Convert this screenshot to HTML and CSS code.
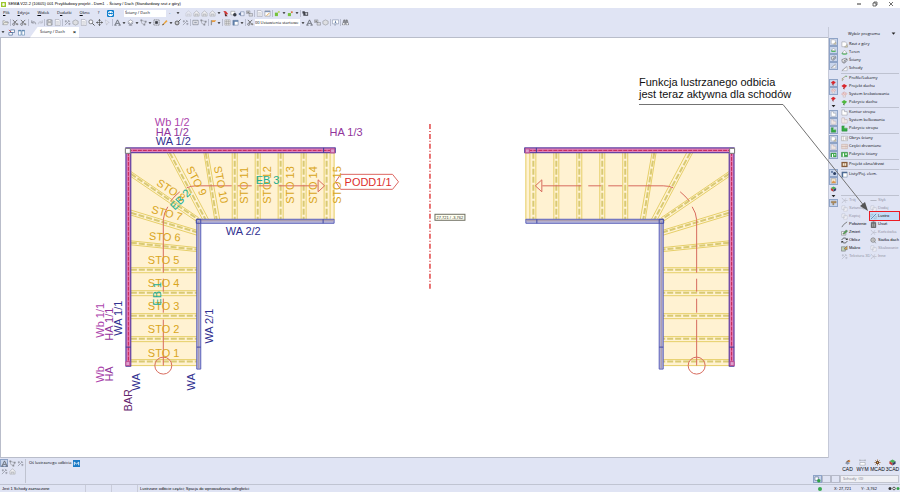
FILE: index.html
```html
<!DOCTYPE html>
<html lang="pl">
<head>
<meta charset="utf-8">
<title>SEMA V22-2</title>
<link rel="stylesheet" href="styles.css">
</head>
<body>
<svg class="sprite" aria-hidden="true">
  <defs>
    <symbol id="folder" viewBox="0 0 16 16"><path d="M2 13V4h4l2 2h5v2M2 13l3-5h10l-3 5z" fill="#ecebe3" stroke="#77797f"/></symbol>
    <symbol id="cut" viewBox="0 0 16 16"><path d="M2 2l10 11M12 2L5 9" fill="none" stroke="#666" stroke-width="2"/><circle cx="4" cy="12" r="2.5" fill="none" stroke="#555" stroke-width="1.5"/><circle cx="12" cy="12" r="2.5" fill="#888"/></symbol>
    <symbol id="undo" viewBox="0 0 16 16"><path d="M4 3v6h6M4 9c3-5 9-3 9 3" fill="none" stroke="#8c8f99" stroke-width="2"/></symbol>
    <symbol id="redo" viewBox="0 0 16 16"><path d="M12 3v6H6M12 9C9 4 3 6 3 12" fill="none" stroke="#b8bbc8" stroke-width="2"/></symbol>
    <symbol id="save" viewBox="0 0 16 16"><path d="M2 2h12v12H2z" fill="#c6c8cf" stroke="#666a75"/><path d="M5 2h6v4H5zM4 9h8v5H4z" fill="#fff" stroke="#777"/></symbol>
    <symbol id="page" viewBox="0 0 16 16"><path d="M3 1h8l3 3v11H3z" fill="#f8f8fb" stroke="#858894"/><path d="M5 6h6M5 9h7M5 12h6" stroke="#a4a6b0"/></symbol>
    <symbol id="frame" viewBox="0 0 16 16"><path d="M2 3h12v10H2z" fill="#f4f4f8" stroke="#777b88" stroke-width="1.5"/><path d="M5 6h6v4H5z" fill="#9ba2b2"/></symbol>
    <symbol id="spark" viewBox="0 0 16 16"><path d="M2 14L12 4M9 2l5 5M4 3v5M2 5h5M10 11h5M12 9v5" fill="none" stroke="#868995" stroke-width="1.5"/></symbol>
    <symbol id="lens" viewBox="0 0 16 16"><circle cx="6.500" cy="6.500" r="4.500" fill="#f7f8ff" stroke="#555" stroke-width="1.5"/><path d="M10 10l5 5" stroke="#444" stroke-width="2"/></symbol>
    <symbol id="move" viewBox="0 0 16 16"><path d="M8 1v14M1 8h14" stroke="#555" stroke-width="1.500"/><path d="M8 0l3 4H5zM8 16l3-4H5zM0 8l4-3v6zM16 8l-4-3v6z" fill="#555"/></symbol>
    <symbol id="pointer" viewBox="0 0 16 16"><path d="M3 2l9 6-4 1-2 5z" fill="#eceef7" stroke="#aeb0bd"/></symbol>
    <symbol id="peak" viewBox="0 0 16 16"><path d="M2 14L8 2l6 12M5 10h6M1 14h5M10 14h5" fill="none" stroke="#555a63" stroke-width="1.8"/></symbol>
    <symbol id="layers" viewBox="0 0 16 16"><path d="M8 2l6 4-6 4-6-4z" fill="#fff" stroke="#696c75"/><path d="M2 9l6 4 6-4M4 14h8" fill="none" stroke="#696c75" stroke-width="1.5"/></symbol>
    <symbol id="poly" viewBox="0 0 16 16"><path d="M3 3l10 3-3 7-6-3z" fill="none" stroke="#777"/><path d="M1 1h4v4H1zM11 4h4v4h-4zM8 11h4v4H8z" fill="#8b8e98"/></symbol>
    <symbol id="target" viewBox="0 0 16 16"><path d="M2 2h12v12H2z" fill="none" stroke="#666" stroke-width="1.500" stroke-dasharray="3 1"/><path d="M5 5h6v6H5z" fill="#34373d"/></symbol>
    <symbol id="pencil" viewBox="0 0 16 16"><path d="M2 14L12 2l3 3L5 14z" fill="#e9a440"/><path d="M2 14l3-4 2 3z" fill="#585858"/></symbol>
    <symbol id="gear" viewBox="0 0 16 16"><circle cx="7" cy="9" r="4.500" fill="#c9cad0" stroke="#555" stroke-width="2"/><path d="M9 7l6-6" stroke="#555" stroke-width="2"/></symbol>
    <symbol id="cloud" viewBox="0 0 16 16"><path d="M2 14V7l6-5 6 5v7z" fill="#f1f1f3" stroke="#a5a6ad" stroke-width="1.3"/><path d="M5 14V9h6v5" fill="#d4d5d9" stroke="#989aa2"/></symbol>
    <symbol id="bolt" viewBox="0 0 16 16"><path d="M3 2l6 1 5 6-5 2z" fill="#d33533"/><path d="M6 6l7 8H7z" fill="#5f2b2b"/></symbol>
    <symbol id="boxdot" viewBox="0 0 16 16"><path d="M2 3h9v8H2z" fill="#fff" stroke="#777"/><circle cx="11" cy="11" r="4" fill="#373b45"/></symbol>
    <symbol id="boxgreen" viewBox="0 0 16 16"><path d="M2 2h8v8H2z" fill="#fff" stroke="#56698f" stroke-width="1.5"/><circle cx="11" cy="11" r="4" fill="#2fa043"/></symbol>
    <symbol id="reply" viewBox="0 0 16 16"><path d="M6 4h8v9H6z" fill="#eef1fc" stroke="#56698f"/><path d="M1 9l5-4v8z" fill="#4a628c"/></symbol>
    <symbol id="two" viewBox="0 0 16 16"><path d="M1 2h8v6H1zM7 8h8v6H7z" fill="#d8d9de" stroke="#70727a"/><path d="M3 4h4v2H3z" fill="#555"/></symbol>
    <symbol id="calendar" viewBox="0 0 16 16"><path d="M2 2h12v12H2z" fill="#fff" stroke="#777"/><path d="M2 2h12v3H2z" fill="#8194b4"/><path d="M6 13l6-6" stroke="#dc9c3c" stroke-width="2"/></symbol>
    <symbol id="leaf" viewBox="0 0 16 16"><path d="M2 6h7v8H2z" fill="#75c23b"/><path d="M9 3h4v3H9z" fill="#b5cf36"/></symbol>
    <symbol id="leafred" viewBox="0 0 16 16"><path d="M2 7h7v7H2z" fill="#75c23b"/><path d="M9 3h4v4H9z" fill="#d97543"/></symbol>
    <symbol id="camera" viewBox="0 0 16 16"><path d="M1 3h5l1 2h7v8H3V8H1z" fill="#40434b"/><circle cx="10" cy="9" r="2.500" fill="#c8cbd6"/></symbol>
    <symbol id="flag" viewBox="0 0 16 16"><path d="M3 3h11l-3 4H5v3z" fill="#e59b3e"/><path d="M3 3v11" stroke="#777" stroke-width="2"/></symbol>
    <symbol id="grid" viewBox="0 0 16 16"><path d="M2 2h12v12H2zM6 2v12M10 2v12M2 6h12M2 10h12" fill="#f2f2f4" stroke="#888"/></symbol>
    <symbol id="pane" viewBox="0 0 16 16"><path d="M2 3h12v11H2z" fill="#fff" stroke="#4a6589"/><path d="M2 3h12v3H2zM2 6h4v8H2z" fill="#5e7ea8"/></symbol>
    <symbol id="hex" viewBox="0 0 16 16"><path d="M8 2l6 3v6l-6 3-6-3V5z" fill="#dedfe3" stroke="#999ba1" stroke-width="1.500"/></symbol>
    <symbol id="bubble" viewBox="0 0 16 16"><path d="M1 2h14v9H9l-2 4-1-4H1z" fill="#fff" stroke="#61708c"/><path d="M8 4v5M6 9h4" stroke="#35578e" stroke-width="1.5"/></symbol>
    <symbol id="binoc" viewBox="0 0 16 16"><path d="M4 2h3v4h2V2h3l3 11H9V9H7v4H1z" fill="#93959d" stroke="#555"/><circle cx="4" cy="11" r="2" fill="#fff"/><circle cx="12" cy="11" r="2" fill="#fff"/></symbol>
    <symbol id="remote" viewBox="0 0 16 16"><rect width="16" height="16" rx="3" fill="#087bcc"/><circle cx="8" cy="8" r="6" fill="#fff"/><path d="M2 8l4-3v2h4V5l4 3-4 3V9H6v2z" fill="#087bcc"/></symbol>
    <symbol id="unpin" viewBox="0 0 16 16"><path d="M6 2h9v6H6zM2 8h8v6H2z" fill="#fff" stroke="#416393" stroke-width="1.5"/><path d="M2 2l5 5" stroke="#d34242" stroke-width="2"/></symbol>
    <symbol id="split" viewBox="0 0 16 16"><path d="M1 3h6v11H1zM9 3h6v11H9z" fill="#fff" stroke="#4b7ba8" stroke-width="1.300"/><path d="M1 3h6v2H1zM9 3h6v2H9z" fill="#4b7ba8"/></symbol>
    <symbol id="plan" viewBox="0 0 16 16"><path d="M2 2h8l3 3v8H2z" fill="#fff" stroke="#85868e"/><path d="M8 14l6-6 1 6z" fill="#ddd5a9" stroke="#888"/></symbol>
    <symbol id="terrain" viewBox="0 0 16 16"><path d="M1 11c2-4 4-4 6-3 2-2 5-1 8 3-3 3-11 3-14 0z" fill="#54bd67"/><path d="M4 7l4-4 4 4v3H4z" fill="#fff" stroke="#777"/></symbol>
    <symbol id="walls" viewBox="0 0 16 16"><path d="M2 6l8-3 4 2-7 3v6l-4-2z" fill="#f7f7f7" stroke="#4e5056" stroke-width="1.300"/><path d="M14 5v4l-4 2V8M7 14l4-2" fill="none" stroke="#555"/></symbol>
    <symbol id="steps" viewBox="0 0 16 16"><path d="M2 13h12V4l-4 3-3 2z" fill="#fafafa" stroke="#8e9099"/><path d="M2 13L13 3" stroke="#777"/></symbol>
    <symbol id="profile" viewBox="0 0 16 16"><path d="M3 14V8l7-5h3M3 8l3 3" fill="none" stroke="#999061" stroke-width="1.500"/><path d="M10 3h4" stroke="#6ab078" stroke-width="2"/></symbol>
    <symbol id="roofred" viewBox="0 0 16 16"><path d="M1 7l6-5 7 4-6 6z" fill="#d9272c"/><path d="M5 10v3l3 2v-3z" fill="#8e2428"/></symbol>
    <symbol id="roofpink" viewBox="0 0 16 16"><path d="M1 7l6-5 7 4-6 6zM4 4l7 5M7 2l-3 7M11 4L7 11" fill="#f7dede" stroke="#cb9b9b"/><path d="M5 10v4h5v-4" fill="#eee" stroke="#b9a4a4"/></symbol>
    <symbol id="roofgreen" viewBox="0 0 16 16"><path d="M1 7l6-5 7 4-6 6z" fill="#4fb83c"/><path d="M5 10v3l3 2v-3z" fill="#376d37"/></symbol>
    <symbol id="slab" viewBox="0 0 16 16"><path d="M2 2h6v4h6v8H2z" fill="#fff" stroke="#82858d"/></symbol>
    <symbol id="beams" viewBox="0 0 16 16"><path d="M2 2h6v4h6v8H2z" fill="#fff" stroke="#b09494"/><path d="M5 2v12M8 6v8M11 6v8" stroke="#cbb6ae"/></symbol>
    <symbol id="slabgreen" viewBox="0 0 16 16"><path d="M2 2h6v5h6v7H2z" fill="#32ad42" stroke="#2b7936"/><path d="M8 2v5h6" fill="none" stroke="#e3f5e5"/></symbol>
    <symbol id="wall" viewBox="0 0 16 16"><path d="M1 3h14v10H1zM5 3v10M10 6h3v4h-3z" fill="#fff" stroke="#8c8886"/></symbol>
    <symbol id="timber" viewBox="0 0 16 16"><path d="M1 3h14v10H1zM4 3v10M7 3v10M10 3v10M13 3v10M1 8h14" fill="#fbf7f5" stroke="#bd9990"/></symbol>
    <symbol id="wallgreen" viewBox="0 0 16 16"><path d="M1 3h14v10H1z" fill="#39ad46" stroke="#26772f"/><path d="M4 5h3v8H4zM10 5h3v4h-3z" fill="#fff"/></symbol>
    <symbol id="window" viewBox="0 0 16 16"><path d="M1 2h14v12H1z" fill="#855b3a"/><path d="M4 5h8v6H4z" fill="#f3e5cf"/><path d="M8 4v8" stroke="#9a6c45"/></symbol>
    <symbol id="list" viewBox="0 0 16 16"><path d="M2 2h12v12H2z" fill="#fff" stroke="#526a8c"/><path d="M2 2h12v3H2zM2 5h3v9H2z" fill="#4d6b94"/></symbol>
    <symbol id="cube" viewBox="0 0 16 16"><path d="M8 1l7 4-7 4-7-4z" fill="#4aae56"/><path d="M1 5l7 4v6l-7-4z" fill="#c33c36"/><path d="M15 5L8 9v6l7-4z" fill="#343e69"/></symbol>
    <symbol id="dots" viewBox="0 0 16 16"><circle cx="4" cy="5" r="3" fill="#6880a8"/><circle cx="11" cy="9" r="4" fill="#2d4064"/></symbol>
    <symbol id="stamp" viewBox="0 0 16 16"><path d="M2 3h13v5H9v5H6V8H2z" fill="#b08a56" stroke="#807562"/></symbol>
    <symbol id="picture" viewBox="0 0 16 16"><path d="M2 2h12v12H2z" fill="#f4ead7" stroke="#8b7b64"/><path d="M3 13l4-7 3 4 2-3 2 6z" fill="#dd9447"/></symbol>
    <symbol id="trim" viewBox="0 0 16 16"><path d="M2 2l5 6-5 6M7 8h8M11 3l-3 5 3 5" fill="none" stroke="#b7b9c5" stroke-width="1.500"/></symbol>
    <symbol id="joint" viewBox="0 0 16 16"><path d="M1 8h14" stroke="#aeb0bd" stroke-width="2"/></symbol>
    <symbol id="copy" viewBox="0 0 16 16"><path d="M2 2h7v8H2zM6 6h8v8H6z" fill="#f3f4fb" stroke="#b4b6c2"/></symbol>
    <symbol id="mirror" viewBox="0 0 16 16"><path d="M2 14L14 2" stroke="#376a99" stroke-width="1.500"/><path d="M2 3h5L2 9zM14 13H9l5-6z" fill="#e6f3ff" stroke="#7197b7"/></symbol>
    <symbol id="place" viewBox="0 0 16 16"><path d="M2 14l4-6 8-6" fill="none" stroke="#666" stroke-width="1.800"/></symbol>
    <symbol id="trash" viewBox="0 0 16 16"><path d="M3 5h10v10H3zM2 3h12M6 2h4" fill="#777" stroke="#444" stroke-width="1.500"/><path d="M6 6v7M10 6v7" stroke="#ddd"/></symbol>
    <symbol id="edit" viewBox="0 0 16 16"><path d="M1 6h10v8H1z" fill="#fff" stroke="#555"/><path d="M4 11l8-9 3 3-8 7z" fill="#53aa55" stroke="#4f554d"/></symbol>
    <symbol id="refresh" viewBox="0 0 16 16"><path d="M2 7c1-6 10-6 12-1M14 9c-1 6-10 6-12 1" fill="none" stroke="#333" stroke-width="1.700"/><path d="M15 2v5h-5zM1 14V9h5z" fill="#333"/></symbol>
    <symbol id="macro" viewBox="0 0 16 16"><path d="M1 4h9v10H1z" fill="#bed1ba" stroke="#555"/><path d="M7 9l7-7v9z" fill="#dfaa46" stroke="#555"/></symbol>
    <symbol id="mesh" viewBox="0 0 16 16"><circle cx="7" cy="7" r="5" fill="#fff" stroke="#555" stroke-width="1.500"/><path d="M3 7h8M7 3v8M10 11l4 3" stroke="#555"/></symbol>
    <symbol id="cad" viewBox="0 0 16 16"><path d="M2 9l6-3 6 3-6 4z" fill="#8795ab"/><path d="M8 3h6v4H8z" fill="#df8a3f"/><path d="M5 7l7-4" stroke="#664d42" stroke-width="2"/></symbol>
    <symbol id="dim" viewBox="0 0 16 16"><path d="M1 3h14M2 1v4M14 1v4M2 8h12v6H2z" fill="#fff" stroke="#85888f"/></symbol>
    <symbol id="mcad" viewBox="0 0 16 16"><path d="M8 1v14M1 8h14M3 3l10 10M13 3L3 13" stroke="#a07346" stroke-width="1.800"/><circle cx="8" cy="8" r="3.500" fill="#54331f"/><circle cx="8" cy="8" r="1.500" fill="#eab65e"/></symbol>
    <symbol id="tri" viewBox="0 0 16 16"><path d="M2 5h12l-6 7z" fill="#222"/></symbol>
    <symbol id="logo" viewBox="0 0 16 16"><path d="M0 0h16v16H0z" fill="#9cc72e"/><path d="M4 5l4-2 4 2v6l-4 2-4-2z" fill="#f6faeb"/></symbol>
  </defs>
</svg>

<div class="app">
  <header class="titlebar">
    <svg class="ico logo"><use href="#logo"/></svg>
    <h1 class="title">SEMA V22-2 (10605) 001 Przykładowy projekt - Dom1 &nbsp;- Ściany / Dach (Standardowy rzut z góry)</h1>
    <div class="window-buttons">
      <button aria-label="Minimalizuj"><svg viewBox="0 0 8 8"><path d="M2 4h4" stroke="#333"/></svg></button>
      <button aria-label="Przywróć"><svg viewBox="0 0 8 8"><path d="M2 3h3v3H2zM3 3V2h3v3H5" fill="none" stroke="#333" stroke-width=".7"/></svg></button>
      <button aria-label="Zamknij"><svg viewBox="0 0 8 8"><path d="M2 2l4 4M6 2L2 6" stroke="#333" stroke-width=".7"/></svg></button>
    </div>
  </header>

  <div class="menubar">
    <nav class="menu">
      <a href="#"><u>P</u>lik</a><a href="#"><u>E</u>dycja</a><a href="#"><u>W</u>idok</a><a href="#">D<u>o</u>datki</a><a href="#"><u>O</u>kno</a><a href="#">?</a>
    </nav>
    <button class="tool" aria-label="Zdalna pomoc"><svg class="ico"><use href="#remote"/></svg></button>
    <select class="field program" aria-label="Program"><option>Ściany / Dach</option></select>
    <div class="tools">
      <span class="dash">-</span>
      <button class="tool caret" aria-label="Rozwiń"><svg class="ico"><use href="#tri"/></svg></button>
      <i class="space"></i>
      <button class="tool faded" aria-label="Dom"><svg class="ico"><use href="#cloud"/></svg></button>
      <button class="tool" aria-label="Piętro"><svg class="ico"><use href="#cloud"/></svg></button>
      <button class="tool" aria-label="Parter"><svg class="ico"><use href="#cloud"/></svg></button>
      <button class="tool" aria-label="Widok domu"><svg class="ico"><use href="#cloud"/></svg></button>
      <button class="tool caret" aria-label="Więcej"><svg class="ico"><use href="#tri"/></svg></button>
      <button class="tool" aria-label="Szybki wybór"><svg class="ico"><use href="#bolt"/></svg></button>
      <button class="tool" aria-label="Punkt"><svg class="ico"><use href="#boxdot"/></svg></button>
      <button class="tool" aria-label="Wstecz"><svg class="ico"><use href="#reply"/></svg></button>
      <button class="tool" aria-label="Grupy"><svg class="ico"><use href="#two"/></svg></button>
      <i class="sep"></i>
      <button class="tool" aria-label="Strona"><svg class="ico"><use href="#page"/></svg></button>
      <button class="tool" aria-label="Plan"><svg class="ico"><use href="#calendar"/></svg></button>
      <i class="sep"></i>
      <button class="tool" aria-label="Eksport"><svg class="ico"><use href="#leaf"/></svg></button>
      <button class="tool caret" aria-label="Opcje eksportu"><svg class="ico"><use href="#tri"/></svg></button>
      <button class="tool" aria-label="Import"><svg class="ico"><use href="#leafred"/></svg></button>
      <button class="tool caret" aria-label="Opcje importu"><svg class="ico"><use href="#tri"/></svg></button>
      <i class="sep"></i>
      <button class="tool" aria-label="Zrzut"><svg class="ico"><use href="#camera"/></svg></button>
    </div>
  </div>

  <div class="toolbar tools">
    <button class="tool" aria-label="Otwórz"><svg class="ico"><use href="#folder"/></svg></button>
    <i class="sep"></i>
    <button class="tool" aria-label="Wytnij"><svg class="ico"><use href="#cut"/></svg></button>
    <button class="tool" aria-label="Rozdziel"><svg class="ico"><use href="#cut"/></svg></button>
    <i class="sep"></i>
    <button class="tool slim" aria-label="Cofnij"><svg class="ico"><use href="#undo"/></svg></button>
    <button class="tool slim" aria-label="Ponów"><svg class="ico"><use href="#redo"/></svg></button>
    <i class="sep"></i>
    <button class="tool" aria-label="Zapisz"><svg class="ico"><use href="#save"/></svg></button>
    <button class="tool" aria-label="Drukuj"><svg class="ico"><use href="#page"/></svg></button>
    <i class="sep"></i>
    <button class="tool" aria-label="Zaznacz"><svg class="ico"><use href="#spark"/></svg></button>
    <button class="tool" aria-label="Środek"><svg class="ico"><use href="#hex"/></svg></button>
    <button class="tool" aria-label="Arkusz"><svg class="ico"><use href="#page"/></svg></button>
    <button class="tool" aria-label="Powiększ"><svg class="ico"><use href="#lens"/></svg></button>
    <button class="tool" aria-label="Przesuń"><svg class="ico"><use href="#move"/></svg></button>
    <button class="tool" aria-label="Wskaźnik"><svg class="ico"><use href="#pointer"/></svg></button>
    <i class="sep"></i>
    <button class="tool" aria-label="Wysokość"><svg class="ico"><use href="#peak"/></svg></button>
    <button class="tool caret" aria-label="Opcje wysokości"><svg class="ico"><use href="#tri"/></svg></button>
    <button class="tool" aria-label="Warstwy"><svg class="ico"><use href="#layers"/></svg></button>
    <button class="tool caret" aria-label="Opcje warstw"><svg class="ico"><use href="#tri"/></svg></button>
    <button class="tool" aria-label="Wielokąt"><svg class="ico"><use href="#poly"/></svg></button>
    <button class="tool caret" aria-label="Opcje wielokąta"><svg class="ico"><use href="#tri"/></svg></button>
    <button class="tool" aria-label="Cel"><svg class="ico"><use href="#target"/></svg></button>
    <button class="tool" aria-label="Rysuj"><svg class="ico"><use href="#pencil"/></svg></button>
    <button class="tool caret" aria-label="Opcje rysowania"><svg class="ico"><use href="#tri"/></svg></button>
    <button class="tool" aria-label="Obróbka"><svg class="ico"><use href="#gear"/></svg></button>
    <button class="tool" aria-label="Grupuj"><svg class="ico"><use href="#spark"/></svg></button>
    <i class="sep"></i>
    <button class="tool" aria-label="Znajdź"><svg class="ico"><use href="#frame"/></svg></button>
    <button class="tool" aria-label="Punkty"><svg class="ico"><use href="#poly"/></svg></button>
    <i class="sep"></i>
    <button class="tool slim" aria-label="Znacznik"><svg class="ico"><use href="#flag"/></svg></button>
    <button class="tool caret" aria-label="Opcje znacznika"><svg class="ico"><use href="#tri"/></svg></button>
    <i class="sep"></i>
    <button class="tool" aria-label="Siatka"><svg class="ico"><use href="#grid"/></svg></button>
    <button class="tool" aria-label="Panele"><svg class="ico"><use href="#pane"/></svg></button>
    <button class="tool caret" aria-label="Opcje paneli"><svg class="ico"><use href="#tri"/></svg></button>
    <i class="sep"></i>
    <button class="tool" aria-label="Ustawienia"><svg class="ico"><use href="#cut"/></svg></button>
    <select class="field settings" aria-label="Ustawienia startowe"><option>00 Ustawienia startowe</option></select>
    <button class="tool caret" aria-label="Lista ustawień"><svg class="ico"><use href="#tri"/></svg></button>
    <button class="tool" aria-label="Pobierz"><svg class="ico"><use href="#peak"/></svg></button>
    <button class="tool" aria-label="Przekaż"><svg class="ico"><use href="#two"/></svg></button>
    <button class="tool" aria-label="Zablokuj"><svg class="ico"><use href="#hex"/></svg></button>
    <i class="sep"></i>
    <button class="tool" aria-label="Informacja"><svg class="ico"><use href="#bubble"/></svg></button>
    <i class="sep"></i>
    <button class="tool" aria-label="Szukaj"><svg class="ico"><use href="#binoc"/></svg></button>
  </div>

  <main class="workspace">
    <section class="editor">
      <div class="tabs">
        <button class="tool caret" aria-label="Lista okien"><svg class="ico"><use href="#tri"/></svg></button>
        <button class="tool" aria-label="Odepnij"><svg class="ico"><use href="#unpin"/></svg></button>
        <button class="tool" aria-label="Podziel okno"><svg class="ico"><use href="#split"/></svg></button>
        <div class="tab"><span>Ściany / Dach</span><button aria-label="Zamknij kartę">×</button></div>
      </div>
      <div class="canvas">
        <svg class="drawing" viewBox="1 38 828 420" role="img" aria-label="Rzut schodów">
          <defs>
            <g id="stairs">
              <path d="M130 152H335V221H199V366H130z" fill="#fff2d2"/>
              <g fill="none" stroke="#e6cf68">
                <path d="M130 268H199M130 273H199M130 291H199M130 296H199M130 314H199M130 319H199M130 337H199M130 342H199M130 360H199M130 366H199"/>
                <path d="M130 241L199 248M130 245L199 252M130 210L199 231M130 215L199 236M130 171L199 218M130 176L199 223M167 152L203 220M173 152L209 220M204 152L215 220M208 152L220 220"/>
                <path d="M232.500 152V220M237.500 152V220M255.500 152V220M260.500 152V220M278.500 152V220M283.500 152V220M301.500 152V220M306.500 152V220M324.500 152V220M330.500 152V220M334.500 152V220"/>
              </g>
              <g fill="none" stroke="#d9ca74" stroke-width="2" stroke-dasharray="6 2">
                <path d="M131 270H199M131 293H199M131 316H199M131 339H199M131 362H199M131 243L199 250M131 213L199 233M131 174L199 220M170 153L206 220M206 153L217 220M235 153V220M258 153V220M281 153V220M304 153V220M327 153V220"/>
              </g>
              <g fill="none" stroke="#d76a5c">
                <path d="M318 186H279M272 186H259M252 186H238M232 186H197Q191 186 187 188M180 192Q175 196 171 201M168 207Q164 213 163.500 220V273M163.500 279V292M163.500 299V313M163.500 320V366M318.500 180V192L325 186z"/>
                <circle cx="163.500" cy="366" r="8.500"/>
              </g>
              <path d="M197 219.500H334.500V223.500H201V369.500H197z" fill="#b9bade" stroke="#5a5fb9"/>
              <path d="M199 369V221H334" fill="none" stroke="#a894a0"/>
              <path d="M196.500 219.500h4.500v4h-4.500zM323.500 219.500v4M197 347.500h4" fill="none" stroke="#4149a6"/>
              <path d="M128.500 367V150.500H336" fill="none" stroke="#6544a5" stroke-width="6"/>
              <path d="M128.500 366V150.500H335" fill="none" stroke="#e282b8" stroke-width="3.500"/>
              <path d="M128.500 366V150.500H335" fill="none" stroke="#c6214f" stroke-dasharray="4 1"/>
              <path d="M125.500 148.500h5v5h-5z" fill="#fff" stroke="#777"/>
              <path d="M126 366.500h5M335.500 148v5M324 148v5M126 347.500h5" stroke="#3c3f99"/>
              <path d="M331 149h4v4h-4zM126 362h4v4h-4z" fill="#dda2cf" stroke="#c04e91"/>
            </g>
          </defs>
          <use href="#stairs"/>
          <use href="#stairs" transform="matrix(-1 0 0 1 861 0)"/>
          <path d="M336 182l5-7.500h52l6 7.500-6 7.500h-52z" fill="none" stroke="#dc6660"/>
          <g class="label step">
            <text x="148" y="357">STO 1</text><text x="148" y="333">STO 2</text><text x="148" y="310">STO 3</text><text x="148" y="287">STO 4</text><text x="148" y="264">STO 5</text>
            <text transform="translate(149 240) rotate(3)">STO 6</text>
            <text transform="translate(151 213) rotate(15)">STO 7</text>
            <text transform="translate(156 185) rotate(33)">STO 8</text>
            <text transform="translate(186 169) rotate(62)">STO 9</text>
            <text transform="translate(214 167) rotate(79)">STO 10</text>
            <text transform="translate(248 204) rotate(-90)">STO 11</text>
            <text transform="translate(271 204) rotate(-90)">STO 12</text>
            <text transform="translate(294 204) rotate(-90)">STO 13</text>
            <text transform="translate(317 204) rotate(-90)">STO 14</text>
            <text transform="translate(341 204) rotate(-90)">STO 15</text>
          </g>
          <g class="label axis">
            <text transform="translate(161 306) rotate(-90)">EB 1</text>
            <text transform="translate(175 211) rotate(-46)">EB 2</text>
            <text x="256" y="184">EB 3</text>
          </g>
          <g class="label outer">
            <text x="155" y="126">Wb 1/2</text>
            <text transform="translate(104 338) rotate(-90)">Wb 1/1</text>
            <text transform="translate(104 383) rotate(-90)">Wb</text>
          </g>
          <g class="label handrail">
            <text x="156" y="136">HA 1/2</text><text x="330" y="136">HA 1/3</text>
            <text transform="translate(113 341) rotate(-90)">HA 1/1</text>
            <text transform="translate(113 382) rotate(-90)">HA</text>
          </g>
          <g class="label stringer">
            <text x="156" y="145">WA 1/2</text><text x="226" y="235">WA 2/2</text>
            <text transform="translate(122 336) rotate(-90)">WA 1/1</text>
            <text transform="translate(213 344) rotate(-90)">WA 2/1</text>
            <text transform="translate(140 391) rotate(-90)">WA</text>
            <text transform="translate(195 391) rotate(-90)">WA</text>
          </g>
          <text class="label baluster" transform="translate(132 412) rotate(-90)">BAR</text>
          <text class="label landing" x="345" y="186">PODD1/1</text>
          <path d="M430.500 124V289" stroke="#dc2a2a" stroke-width="1.300" stroke-dasharray="5 2 1 2"/>
          <rect x="435.500" y="214.500" width="30" height="6" fill="#fffff0" stroke="#6f6f62"/>
          <text class="coords" x="437" y="219">27,721 / -3,762</text>
        </svg>
      </div>
    </section>

    <aside class="side">
      <div class="side-head"><span>Wybór programu</span><svg class="ico small"><use href="#tri"/></svg></div>
      <div class="side-body">
        <div class="rail">
          <div class="rail-group">
            <button class="on" aria-label="Rzut"><svg class="ico"><use href="#plan"/></svg></button>
            <button class="on" aria-label="Pokaż teren"><svg class="ico"><use href="#terrain"/></svg></button>
            <button class="on" aria-label="Pokaż ściany"><svg class="ico"><use href="#walls"/></svg></button>
            <button class="on" aria-label="Pokaż schody"><svg class="ico"><use href="#steps"/></svg></button>
          </div>
          <div class="rail-group">
            <button class="on" aria-label="Pokaż dach"><svg class="ico"><use href="#roofred"/></svg></button>
            <button class="on" aria-label="Pokaż krokwie"><svg class="ico"><use href="#roofpink"/></svg></button>
            <button aria-label="Pokaż pokrycie"><svg class="ico"><use href="#roofred"/></svg></button>
            <svg class="ico small"><use href="#tri"/></svg>
          </div>
          <div class="rail-group">
            <button class="on" aria-label="Pokaż kontur"><svg class="ico"><use href="#slab"/></svg></button>
            <button class="on" aria-label="Pokaż belki"><svg class="ico"><use href="#beams"/></svg></button>
            <button class="on" aria-label="Pokaż strop"><svg class="ico"><use href="#slabgreen"/></svg></button>
          </div>
          <div class="rail-group">
            <button class="on" aria-label="Pokaż obrys"><svg class="ico"><use href="#plan"/></svg></button>
            <button class="on" aria-label="Pokaż części"><svg class="ico"><use href="#beams"/></svg></button>
            <button class="on" aria-label="Pokaż poszycie"><svg class="ico"><use href="#wallgreen"/></svg></button>
          </div>
          <div class="rail-group last">
            <button class="on" aria-label="Punkty"><svg class="ico"><use href="#dots"/></svg></button>
            <button class="on" aria-label="Obraz"><svg class="ico"><use href="#picture"/></svg></button>
            <button aria-label="Bryła"><svg class="ico"><use href="#cube"/></svg></button>
            <svg class="ico small"><use href="#tri"/></svg>
            <button class="on" aria-label="Oznacz"><svg class="ico"><use href="#stamp"/></svg></button>
          </div>
        </div>
        <div class="programs">
          <div class="group">
            <button><svg class="ico"><use href="#plan"/></svg>Rzut z góry</button>
            <button><svg class="ico"><use href="#terrain"/></svg>Teren</button>
            <button><svg class="ico"><use href="#walls"/></svg>Ściany</button>
            <button><svg class="ico"><use href="#steps"/></svg>Schody</button>
          </div>
          <div class="group">
            <button><svg class="ico"><use href="#profile"/></svg>Profile/Lukarny</button>
            <button><svg class="ico"><use href="#roofred"/></svg>Projekt dachu</button>
            <button><svg class="ico"><use href="#roofpink"/></svg>System krokwiowania</button>
            <button><svg class="ico"><use href="#roofgreen"/></svg>Pokrycie dachu</button>
          </div>
          <div class="group">
            <button><svg class="ico"><use href="#slab"/></svg>Kontur stropu</button>
            <button><svg class="ico"><use href="#beams"/></svg>System belkowania</button>
            <button><svg class="ico"><use href="#slabgreen"/></svg>Pokrycie stropu</button>
          </div>
          <div class="group">
            <button><svg class="ico"><use href="#wall"/></svg>Obrys ściany</button>
            <button><svg class="ico"><use href="#timber"/></svg>Części drewniane</button>
            <button><svg class="ico"><use href="#wallgreen"/></svg>Pokrycie ściany</button>
          </div>
          <div class="group"><button><svg class="ico"><use href="#window"/></svg>Projekt okna/drzwi</button></div>
          <div class="group"><button><svg class="ico"><use href="#list"/></svg>Listy/Poj. elem.</button></div>
          <div class="edit">
            <button disabled><svg class="ico"><use href="#trim"/></svg>Trój</button>
            <button disabled><svg class="ico"><use href="#joint"/></svg>Styk</button>
            <button disabled><svg class="ico"><use href="#copy"/></svg>Sztancuj</button>
            <button disabled><svg class="ico"><use href="#copy"/></svg>Dodaj</button>
            <button disabled><svg class="ico"><use href="#copy"/></svg>Kopiuj</button>
            <button class="active"><svg class="ico"><use href="#mirror"/></svg>Lustro</button>
            <button><svg class="ico"><use href="#place"/></svg>Położenie</button>
            <button><svg class="ico"><use href="#trash"/></svg>Usuń</button>
            <button><svg class="ico"><use href="#edit"/></svg>Zmień</button>
            <button disabled><svg class="ico"><use href="#trim"/></svg>Końcówka</button>
            <button><svg class="ico"><use href="#refresh"/></svg>Oblicz</button>
            <button><svg class="ico"><use href="#mesh"/></svg>Siatka dach</button>
            <button><svg class="ico"><use href="#macro"/></svg>Makro</button>
            <button disabled><svg class="ico"><use href="#copy"/></svg>Skalowanie</button>
            <button disabled><svg class="ico faded"><use href="#spark"/></svg>Tekstura 3D</button>
            <button disabled><svg class="ico"><use href="#trim"/></svg>Inne</button>
          </div>
        </div>
      </div>
    </aside>

    <svg class="callout" viewBox="0 0 270 150" aria-label="Objaśnienie">
      <g class="callout-text"><text x="9" y="20">Funkcja lustrzanego odbicia</text><text x="9" y="32">jest teraz aktywna dla schodów</text></g>
      <path d="M9 38.500H153L235 141" fill="none" stroke="#737373"/>
      <path d="M238 145l-8-5 5-4z" fill="#555"/>
    </svg>
  </main>

  <section class="options">
    <div class="snaps">
      <button class="on" aria-label="Odbicie w osi"><svg class="ico"><use href="#peak"/></svg></button>
      <button aria-label="Odbicie w punkcie"><svg class="ico"><use href="#poly"/></svg></button>
      <button aria-label="Odbicie krawędzi"><svg class="ico"><use href="#spark"/></svg></button>
      <button aria-label="Obrót"><svg class="ico"><use href="#spark"/></svg></button>
      <button aria-label="Warstwa"><svg class="ico"><use href="#cloud"/></svg></button>
    </div>
    <div class="prompt"><span>Oś lustrzanego odbicia</span><button aria-label="Wybierz oś"><svg viewBox="0 0 16 16"><path d="M3 12V5l5 4 5-4v7" fill="none" stroke="#fff" stroke-width="2"/></svg></button></div>
    <div class="modes">
      <div class="mode-row">
        <button><svg class="ico"><use href="#cad"/></svg>CAD</button>
        <button><svg class="ico"><use href="#dim"/></svg>WYM</button>
        <button><svg class="ico"><use href="#mcad"/></svg>MCAD</button>
        <button><svg class="ico"><use href="#cube"/></svg>3CAD</button>
      </div>
      <div class="filter">
        <button class="on" aria-label="Filtr elementów"><svg class="ico"><use href="#boxgreen"/></svg></button>
        <button aria-label="Filtr grup"></button>
        <button aria-label="Filtr warstw"></button>
        <select aria-label="Element"><option>Schody &nbsp;(0)</option></select>
      </div>
    </div>
  </section>

  <footer class="status">
    <span class="cell selected">Jest 1 Schody zaznaczone</span>
    <span class="cell blank"></span>
    <span class="cell blank"></span>
    <span class="cell hint">Lustrzane odbicie części; Spacja do wprowadzania odległości</span>
    <i class="led"></i>
    <span class="pos">X: 27,721</span>
    <span class="pos">Y: -3,762</span>
    <svg class="leds" viewBox="0 0 12 5"><circle cx="2" cy="2.500" r="1.500" fill="#333"/><circle cx="6" cy="2.500" r="1.300" fill="#fff" stroke="#555"/><circle cx="10" cy="2.500" r="1.500" fill="#35a049"/></svg>
  </footer>
</div>
</body>
</html>
```
FILE: styles.css
```css
* { box-sizing: border-box; }

body {
  margin: 0;
  background: #e0e4f4;
  color: #05070f;
  font: 4px/6px "Open Sans", "Noto Sans", sans-serif;
}

button, select {
  margin: 0;
  padding: 0;
  border: 0;
  background: none;
  color: inherit;
  font: inherit;
  appearance: none;
}
select, button:disabled { opacity: 1; }

a { color: inherit; text-decoration: none; }
svg { display: block; }
.sprite { position: absolute; width: 0; height: 0; }
.ico { width: 7px; height: 7px; flex: none; }
.small { width: 5px; height: 5px; }
.faded { opacity: 0.5; }

.app { display: flex; flex-direction: column; min-height: 100vh; }

/* Title and menus */
.titlebar {
  display: flex;
  align-items: center;
  height: 8px;
  padding-left: 1px;
  gap: 2px;
  background: #fff;
}
.logo { width: 5px; height: 5px; }
.title { margin: 0; font: 4px/8px "Liberation Sans", sans-serif; color: #000; }
.window-buttons { display: flex; gap: 8px; margin-left: auto; padding-right: 5px; }
.window-buttons svg { width: 8px; height: 8px; }

.menubar { display: flex; align-items: center; height: 10px; padding-left: 3px; }
.menu { display: flex; gap: 8px; width: 104px; }
.program { width: 42px; margin: 0 3px 0 10px; }
.field { height: 7px; padding: 0 1px; background: #fff; }
.settings { width: 45px; padding: 0; }
.tools { display: flex; align-items: center; gap: 1px; }
.tool { display: flex; justify-content: center; width: 7px; flex: none; }
.slim { width: 6px; }
.caret { width: 4px; }
.caret .ico { width: 4px; height: 4px; }
.sep { width: 1px; height: 7px; background: #b9bdce; }
.space { width: 3px; }
.dash { width: 6px; }
.toolbar { height: 9px; padding-left: 2px; }

/* Workspace */
.workspace { display: flex; flex: 1; position: relative; }
.editor { display: flex; flex-direction: column; flex: 1; min-width: 0; }
.tabs { display: flex; align-items: center; gap: 3px; height: 11px; padding-left: 1px; border-bottom: 1px solid #b9bdca; }
.tab {
  display: flex;
  align-items: center;
  gap: 8px;
  height: 11px;
  margin-left: 2px;
  padding: 0 3px 0 10px;
  background: #fff;
  clip-path: polygon(8px 0, 100% 0, 100% 100%, 0 100%);
}
.tab button { font-size: 6px; font-weight: 700; }
.canvas { flex: 1; background: #fff; border-left: 1px solid #b9bdca; border-bottom: 1px solid #b9bdca; }
.drawing { width: 100%; height: auto; }

.label { font: 11px "Liberation Sans", Arial, sans-serif; }
.step { fill: #d9a520; }
.axis { fill: #20ad94; }
.outer { fill: #ad45ad; }
.handrail { fill: #91359b; }
.stringer { fill: #303090; }
.baluster { fill: #64256e; }
.landing { fill: #dd2c2c; }
.coords { font: 4px "Liberation Sans", sans-serif; fill: #333; }

.callout { position: absolute; right: 0; top: 39px; width: 270px; height: 150px; pointer-events: none; }
.callout-text { font: 11px "Liberation Sans", Arial, sans-serif; fill: #111; }

/* Program panel */
.side { width: 72px; border-left: 1px solid #c5c9d8; }
.side-head { display: flex; align-items: center; justify-content: space-between; height: 11px; padding: 2px 4px 0 19px; }
.side-body { display: flex; gap: 3px; }
.rail { width: 9px; }
.rail-group { display: flex; flex-direction: column; align-items: center; margin-bottom: 9px; }
.rail-group + .rail-group { margin-bottom: 1px; }
.rail-group button, .snaps button, .filter button {
  display: flex;
  align-items: center;
  justify-content: center;
  width: 9px;
  height: 8px;
  border: 1px solid transparent;
}
.rail-group .on, .snaps .on, .filter .on { background: #c9d5ec; border-color: #8ea3c7; }
.rail-group .ico { height: 6px; }
.rail-group.last { margin-top: 10px; }
.programs { flex: 1; min-width: 0; padding: 2px 1px 0 0; }
.group { padding-bottom: 1px; border-bottom: 1px solid #bec2d0; }
.group:nth-child(6) { border: 0; }
.programs button { display: flex; align-items: center; gap: 1px; height: 8px; white-space: nowrap; }
.programs button:disabled { color: #9497a8; }
.edit {
  display: grid;
  grid-template-columns: 29px 1fr;
  margin-top: 16px;
  border-top: 1px solid #bec2d0;
  font-family: "Liberation Sans", sans-serif;
}
.programs .active { background: #c4dcf7; outline: 1px solid #ec1c24; }

/* Options strip */
.options { display: flex; height: 26px; }
.snaps {
  display: grid;
  grid-template-columns: repeat(3, 8px);
  grid-auto-rows: 8px;
  align-content: start;
  width: 26px;
  margin: 1px 3px 1px 0;
  border-right: 1px solid #bfc3d0;
}
.snaps button { width: 8px; }
.prompt { display: flex; gap: 2px; height: 8px; align-items: center; margin-top: 1px; }
.prompt button { width: 7px; height: 7px; background: #1979c5; }
.modes { display: flex; flex-direction: column; align-items: flex-end; margin-left: auto; }
.mode-row { display: flex; width: 60px; height: 17px; font: 5px/7px "Liberation Sans", sans-serif; }
.mode-row button { display: flex; flex-direction: column; align-items: center; flex: 1; padding-top: 1px; }
.filter { display: flex; width: 87px; height: 8px; padding-right: 1px; }
.filter button { border-color: #b6bac9; }
.filter select { flex: 1; padding-left: 2px; background: #eff0f5; border: 1px solid #c2c5cf; color: #777a88; }

.status { display: flex; align-items: center; height: 8px; border-top: 1px solid #c0c4d2; font-family: "Liberation Sans", sans-serif; }
.cell { padding-left: 2px; border-right: 1px solid #c9ccda; height: 7px; line-height: 7px; }
.selected { width: 86px; }
.blank { width: 26px; }
.hint { flex: 1; border: 0; }
.led { width: 4px; height: 4px; margin-right: 12px; border-radius: 50%; background: #3ca951; }
.pos { width: 27px; }
.leds { width: 12px; height: 5px; }
```
